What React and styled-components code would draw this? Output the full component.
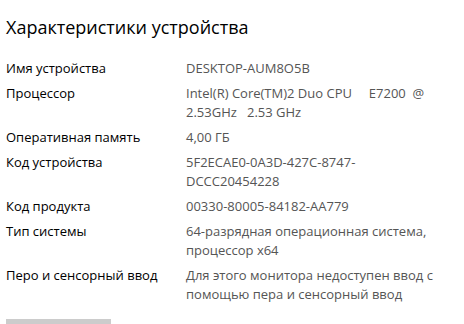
import React from "react";
import styled, { createGlobalStyle } from "styled-components";

const GlobalStyle = createGlobalStyle`
  html, body {
    margin: 0;
    padding: 0;
    background: #fff;
    overflow: hidden;
  }
  body {
    font-family: "Open Sans", "Noto Sans", "Liberation Sans", sans-serif;
  }
`;

const Page = styled.div`
  width: 464px;
  height: 324px;
  padding: 14px 0 0 6px;
  box-sizing: border-box;
  display: flex;
  flex-direction: column;
`;

const Title = styled.h1`
  margin: 0 0 19px 0;
  font-size: 18px;
  line-height: 26px;
  font-weight: 400;
  color: #000;
`;

const Specs = styled.div`
  display: grid;
  grid-template-columns: 180px 1fr;
  row-gap: 6px;
`;

const Label = styled.div`
  font-size: 13px;
  line-height: 19px;
  color: #000;
`;

const Value = styled.div`
  font-size: 13px;
  line-height: 19px;
  color: #555;
  white-space: pre-wrap;
`;

const Scroll = styled.div`
  margin-top: auto;
  width: 105px;
  height: 5px;
  background: #cccccc;
`;

const specs = [
  ["Имя устройства", "DESKTOP-AUM8O5B"],
  ["Процессор", "Intel(R) Core(TM)2 Duo CPU     E7200  @\n2.53GHz   2.53 GHz"],
  ["Оперативная память", "4,00 ГБ"],
  ["Код устройства", "5F2ECAE0-0A3D-427C-8747-\nDCCC20454228"],
  ["Код продукта", "00330-80005-84182-AA779"],
  ["Тип системы", "64-разрядная операционная система,\nпроцессор x64"],
  ["Перо и сенсорный ввод", "Для этого монитора недоступен ввод с\nпомощью пера и сенсорный ввод"],
];

const App = () => {
  return (
    <>
      <GlobalStyle />
      <Page>
        <Title>Характеристики устройства</Title>
        <Specs>
          {specs.map(([label, value]) => (
            <React.Fragment key={label}>
              <Label>{label}</Label>
              <Value>{value}</Value>
            </React.Fragment>
          ))}
        </Specs>
        <Scroll />
      </Page>
    </>
  );
};

export default App;
